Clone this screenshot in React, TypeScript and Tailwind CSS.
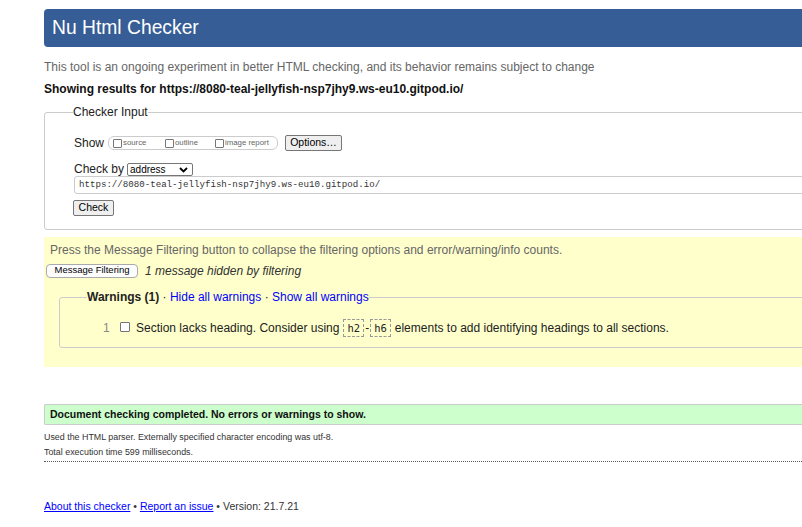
import React from "react";

const F = "font-['Liberation_Sans',Arial,sans-serif]";

function Cb() {
  return <span className="inline-block w-[9px] h-[9px] border border-[#767676] rounded-[1px] bg-white mr-[1px] align-[-1px]" />;
}

export default function App() {
  return (
    <div className={`w-[802px] h-[527px] overflow-hidden bg-white ${F} text-[#222]`}>
      <div className="ml-[44px] w-[820px]">
        <div className="mt-[9px] h-[38px] bg-[#365d95] rounded-l-[4px] flex items-center pl-[8px]">
          <h1 className="text-white text-[19.3px] leading-none">Nu Html Checker</h1>
        </div>
        <p className="mt-[13px] text-[12px] leading-[14px] text-[#666]">
          This tool is an ongoing experiment in better HTML checking, and its behavior remains subject to change
        </p>
        <p className="mt-[8px] text-[12px] leading-[14px] font-bold text-[#111]">
          Showing results for https://8080-teal-jellyfish-nsp7jhy9.ws-eu10.gitpod.io/
        </p>
        <fieldset className="mt-[8px] border border-[#ccc] rounded-[3px] pl-[29px] pb-[13px] h-[126px]">
          <legend className="-ml-[1px] text-[12px] leading-[16px] text-[#222]">Checker Input</legend>
          <div className="mt-[15px] flex items-center h-[16px]">
            <span className="text-[12px]">Show</span>
            <span className="ml-[4px] h-[14px] w-[170px] border border-[#ccc] rounded-[6px] flex items-center pl-[4px] text-[7.8px] text-[#666]">
              <span className="w-[52px] flex items-center"><Cb />source</span>
              <span className="w-[50px] flex items-center"><Cb />outline</span>
              <span className="flex items-center"><Cb />image report</span>
            </span>
            <span className="ml-[7px] h-[16px] w-[57px] border border-[#767676] rounded-[2px] bg-[#efefef] text-[10.5px] flex items-center justify-center text-black">Options…</span>
          </div>
          <div className="mt-[10px] flex items-end h-[15px]">
            <span className="text-[12px] leading-[14px]">Check by</span>
            <span className="ml-[3px] h-[13px] w-[66px] border border-[#767676] rounded-[2px] flex items-center pl-[2px] pr-[4px] text-[10px] text-black justify-between">
              address
              <svg width="9" height="6" viewBox="0 0 9 6"><path d="M1 1l3.5 3.5L8 1" fill="none" stroke="#000" strokeWidth="1.8" /></svg>
            </span>
          </div>
          <div className="mt-[0px] h-[18px] border border-[#ccc] rounded-[3px] flex items-center pl-[4px] font-['Liberation_Mono','DejaVu_Sans_Mono',monospace] text-[9.15px] text-[#333]">
            https://8080-teal-jellyfish-nsp7jhy9.ws-eu10.gitpod.io/
          </div>
          <div className="mt-[6px] -ml-[1px] h-[16px] w-[41px] border border-[#767676] rounded-[2px] bg-[#efefef] text-[10.5px] flex items-center justify-center text-black">Check</div>
        </fieldset>
        <div className="mt-[7px] bg-[#ffffcc] h-[130px] pt-[6px]">
          <p className="pl-[6px] text-[12px] leading-[14px] text-[#666]">
            Press the Message Filtering button to collapse the filtering options and error/warning/info counts.
          </p>
          <div className="mt-[6px] flex items-center h-[15px]">
            <span className="ml-[2px] h-[14px] w-[92px] border border-[#aaa] rounded-[4px] bg-[#fdfdfd] text-[9.5px] flex items-center justify-center text-black">Message Filtering</span>
            <span className="ml-[7px] italic text-[12px] text-[#333]">1 message hidden by filtering</span>
          </div>
          <fieldset className="mt-[11px] ml-[15px] border border-[#ccc] rounded-[3px] pl-[27px] h-[59px]">
            <legend className="text-[12px] leading-[16px]">
              <b className="text-[#222]">Warnings (1)</b> · <span className="text-[#00f]">Hide all warnings</span> · <span className="text-[#00f]">Show all warnings</span>
            </legend>
            <div className="mt-[14px] ml-[16px] flex items-center text-[12px] h-[18px]">
              <span className="w-[17px] text-[#888]">1</span>
              <span className="inline-block w-[10px] h-[10px] border border-[#767676] rounded-[1px] bg-white -mt-[3px]" />
              <span className="ml-[6px] text-[#222] flex items-center">
                Section lacks heading. Consider using
                <code className="ml-[4px] px-[3px] border border-dashed border-[#999] font-['DejaVu_Sans_Mono',monospace] text-[10.5px] leading-[16px]">h2</code>
                <span className="mx-[1px]">-</span>
                <code className="px-[3px] border border-dashed border-[#999] font-['DejaVu_Sans_Mono',monospace] text-[10.5px] leading-[16px]">h6</code>
                <span className="ml-[4px]">elements to add identifying headings to all sections.</span>
              </span>
            </div>
          </fieldset>
        </div>
        <div className="mt-[37px] h-[21px] bg-[#ccffcc] border-y border-[#ccc] border-l flex items-center pl-[5px] text-[10.5px] font-bold text-[#111] rounded-l-[2px]">
          Document checking completed. No errors or warnings to show.
        </div>
        <p className="mt-[5px] text-[8.9px] leading-[14px] text-[#333]">
          Used the HTML parser. Externally specified character encoding was utf-8.
        </p>
        <p className="mt-[1px] text-[8.9px] leading-[14px] text-[#333]">Total execution time 599 milliseconds.</p>
        <div className="mt-[2px] border-t border-dotted border-[#555]" />
        <p className="mt-[37px] text-[10.5px] leading-[14px] text-[#333]">
          <a className="text-[#00f] underline">About this checker</a> • <a className="text-[#00f] underline">Report an issue</a> • Version: 21.7.21
        </p>
      </div>
    </div>
  );
}
